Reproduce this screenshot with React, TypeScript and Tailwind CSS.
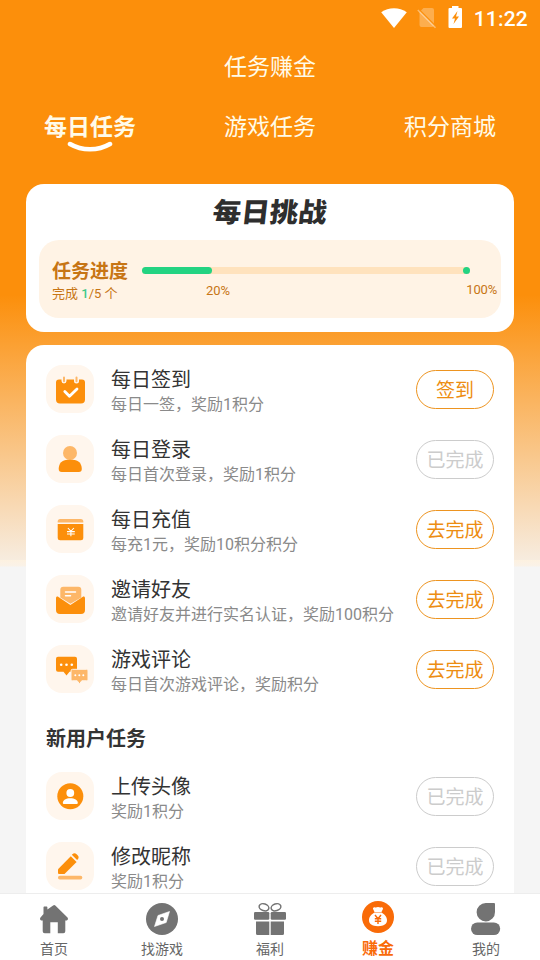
import { ReactNode } from 'react';
import clsx from 'clsx';

type Task = {
  title: string;
  desc: string;
  action: string;
  done?: boolean;
  icon: ReactNode;
};

const CalendarIcon = () => (
  <svg width="48" height="48" viewBox="0 0 48 48" fill="none">
    <path d="M10 17.500a3 3 0 0 1 3-3h2.500v1.500a2.500 2.500 0 0 0 5 0v-1.500h7.500v1.500a2.500 2.500 0 0 0 5 0v-1.500H36a3 3 0 0 1 3 3V34.500a4 4 0 0 1-4 4H14a4 4 0 0 1-4-4Z" fill="#fc8f0b" />
    <path d="M18 12.500v3.800M30.500 12.500v3.800" stroke="#fdb768" strokeWidth="2" strokeLinecap="round" />
    <path d="m18.800 26.500 4.700 4.800 7.500-7.300" stroke="#fff" strokeWidth="2.800" strokeLinecap="round" strokeLinejoin="round" />
  </svg>
);

const UserIcon = () => (
  <svg width="48" height="48" viewBox="0 0 48 48" fill="none">
    <circle cx="24" cy="18" r="7" fill="#fdb768" />
    <path d="M12.700 34c0-5.500 3.500-9.200 9-9.200h5c5.500 0 9.100 3.700 9.100 9.200 0 2-1 2.900-3 2.900H15.700c-2 0-3-.9-3-2.900Z" fill="#fc8f0b" />
  </svg>
);

const WalletIcon = () => (
  <svg width="48" height="48" viewBox="0 0 48 48" fill="none">
    <path d="M11.700 17.500v-1a2.500 2.500 0 0 1 2.500-2.500h20.600a2.500 2.500 0 0 1 2.500 2.500v1Z" fill="#fdb768" />
    <path d="M11.700 19h25.600v13.800a2.500 2.500 0 0 1-2.500 2.500H14.200a2.500 2.500 0 0 1-2.500-2.500Z" fill="#fc8f0b" />
    <path d="m21.900 23 3 3.300 3-3.300M24.900 26.300v5M21 26.600h7.800M21 29h7.800" stroke="#fff" strokeWidth="1.100" />
  </svg>
);

const InviteIcon = () => (
  <svg width="48" height="48" viewBox="0 0 48 48" fill="none">
    <path d="M14.300 22.500V14.700a3 3 0 0 1 3-3h15a3 3 0 0 1 3 3v7.800l-10.800 6.300Z" fill="#fdb768" />
    <path d="M19.500 17h10M19.500 20.800h5" stroke="#fff" strokeWidth="1.500" strokeLinecap="round" />
    <path d="M10 23.300c0-1.600 1.200-2.300 2.500-1.400l11.900 8.100 12.100-8.100c1.300-.9 2.500-.2 2.500 1.400V35a4 4 0 0 1-4 4H14a4 4 0 0 1-4-4Z" fill="#fc8f0b" />
  </svg>
);

const CommentIcon = () => (
  <svg width="48" height="48" viewBox="0 0 48 48" fill="none">
    <path d="M12 11.700h17a2 2 0 0 1 2 2v11a2 2 0 0 1-2 2h-5.500l-3 3.800-3-3.800H12a2 2 0 0 1-2-2v-11a2 2 0 0 1 2-2Z" fill="#fc8f0b" />
    <path d="M26.500 24.300H40.500a1.500 1.500 0 0 1 1.500 1.500v8.500a1.500 1.500 0 0 1-1.500 1.500h-4.700l-2.300 3-2.300-3h-4.700a1.500 1.500 0 0 1-1.500-1.500v-8.500a1.500 1.500 0 0 1 1.500-1.500Z" fill="#fdb768" stroke="#fff5ea" />
    <g fill="#fff">
      <circle cx="15.200" cy="19.700" r="1.300" />
      <circle cx="20.500" cy="19.700" r="1.300" />
      <circle cx="25.800" cy="19.700" r="1.300" />
      <circle cx="29.300" cy="30.300" r="1" />
      <circle cx="33.300" cy="30.300" r="1" />
      <circle cx="37.300" cy="30.300" r="1" />
    </g>
  </svg>
);

const AvatarIcon = () => (
  <svg width="48" height="48" viewBox="0 0 48 48" fill="none">
    <circle cx="24.300" cy="24.300" r="13" fill="#fc8f0b" />
    <circle cx="24.300" cy="21" r="3.900" fill="#fff" />
    <path d="M16.800 31c0-3 3.200-4.800 7.500-4.800s7.500 1.800 7.500 4.800c0 .6-.4.900-1 .9h-13c-.6 0-1-.3-1-.9Z" fill="#fff" />
  </svg>
);

const PencilIcon = () => (
  <svg width="48" height="48" viewBox="0 0 48 48" fill="none">
    <path d="m12 27.300 12.800-13 5.800 5.600L18.500 32H13a1 1 0 0 1-1-1Z" fill="#fc8f0b" />
    <path d="m25.800 12.800.6-.6a3 3 0 0 1 4.200 0l1 1a3 3 0 0 1 0 4.200l-.5.600Z" fill="#fc8f0b" />
    <rect x="12" y="33.800" width="24.300" height="3.700" rx="1.800" fill="#fdb768" />
  </svg>
);

const dailyTasks: Task[] = [
  { title: '每日签到', desc: '每日一签，奖励1积分', action: '签到', icon: <CalendarIcon /> },
  { title: '每日登录', desc: '每日首次登录，奖励1积分', action: '已完成', done: true, icon: <UserIcon /> },
  { title: '每日充值', desc: '每充1元，奖励10积分积分', action: '去完成', icon: <WalletIcon /> },
  { title: '邀请好友', desc: '邀请好友并进行实名认证，奖励100积分', action: '去完成', icon: <InviteIcon /> },
  { title: '游戏评论', desc: '每日首次游戏评论，奖励积分', action: '去完成', icon: <CommentIcon /> },
];

const newUserTasks: Task[] = [
  { title: '上传头像', desc: '奖励1积分', action: '已完成', done: true, icon: <AvatarIcon /> },
  { title: '修改昵称', desc: '奖励1积分', action: '已完成', done: true, icon: <PencilIcon /> },
];

const navItems = [
  {
    label: '首页',
    icon: (
      <svg width="32" height="34" viewBox="0 0 32 34" fill="#737373">
        <path d="M5.500 12V5.500c0-.6.400-1 1-1H8.400c.6 0 1 .4 1 1v2l5.700-4a1.700 1.700 0 0 1 2.200 0L29.500 15.500c.8.800.6 2.900-.8 2.900h-1.400V29.300a2 2 0 0 1-2 2h-5.500v-11h-7.500v11H6.700a2 2 0 0 1-2-2V18.400H3.300c-1.400 0-1.600-2.100-.8-2.900Z" />
      </svg>
    ),
  },
  {
    label: '找游戏',
    icon: (
      <svg width="32" height="34" viewBox="0 0 32 34">
        <circle cx="16" cy="17" r="16" fill="#737373" />
        <path d="m23.500 9.500-3.300 11-11.700 4 3.500-11Z" fill="#fff" stroke="#fff" strokeWidth=".6" strokeLinejoin="round" />
        <circle cx="16" cy="17" r="2" fill="#737373" />
      </svg>
    ),
  },
  {
    label: '福利',
    icon: (
      <svg width="32" height="34" viewBox="0 0 32 34" fill="#737373">
        <ellipse cx="10" cy="5.300" rx="5" ry="3.400" transform="rotate(18 10 5.300)" fill="none" stroke="#737373" strokeWidth="1.500" />
        <ellipse cx="22" cy="5.300" rx="5" ry="3.400" transform="rotate(-18 22 5.300)" fill="none" stroke="#737373" strokeWidth="1.500" />
        <rect x="0" y="10" width="15.300" height="7.800" rx="1.200" />
        <rect x="16.700" y="10" width="15.300" height="7.800" rx="1.200" />
        <path d="M2 19.500h13.300V33H3.500A1.500 1.500 0 0 1 2 31.500ZM16.700 19.500H30v12a1.500 1.500 0 0 1-1.500 1.500H16.700Z" />
      </svg>
    ),
  },
  {
    label: '赚金',
    active: true,
    icon: (
      <svg className="overflow-visible" width="32" height="34" viewBox="0 0 32 34">
        <circle cx="16" cy="15" r="16" fill="#f96b08" />
        <path d="M12.800 5.200c1.200.7 2-.2 3.200-.2s2 .9 3.200.2c1.500-.3 2.300 1 1.500 2.300L19.500 10h-7l-1.200-2.500c-.8-1.300 0-2.600 1.500-2.300ZM12.500 10.500h7c3 1.500 5.500 4.500 5.500 7.500 0 4-3 6.200-9 6.200S7 22 7 18c0-3 2.500-6 5.500-7.500Z" fill="#fff" />
        <path d="m13 13 3 3.800 3-3.800M16 16.800v5.200M12.800 16.700h6.400M12.800 19.200h6.400" fill="none" stroke="#f96b08" strokeWidth="1.400" />
      </svg>
    ),
  },
  {
    label: '我的',
    icon: (
      <svg width="32" height="34" viewBox="0 0 32 34" fill="#737373">
        <path d="M15.800 1H24a1 1 0 0 1 1 1v8a9.200 9.200 0 1 1-9.200-9Z" />
        <rect x="1" y="20.400" width="29.200" height="12.700" rx="6.300" />
      </svg>
    ),
  },
];

function StatusBar() {
  return (
    <div className="flex h-[37px] items-center justify-end pr-3 text-white">
      <svg width="26" height="22" viewBox="0 0 26 22" fill="#fff">
        <path d="M.2 4.300C7.500-1 18.500-1 25.800 4.300L13 20Z" />
      </svg>
      <svg className="ml-[10px]" width="20" height="22" viewBox="0 0 20 22">
        <path d="M6.500 0H15a2 2 0 0 1 2 2V17a2 2 0 0 1-2 2H4.500a2 2 0 0 1-2-2V4Z" fill="#fff" fillOpacity=".28" />
        <path d="M2 1.500 19 18.500" stroke="#fc8f0b" strokeWidth="1.500" />
        <path d="M.8 2 18.500 19.800" stroke="#fff" strokeOpacity=".4" strokeWidth="1.500" />
      </svg>
      <svg className="ml-[11px] mb-[3px]" width="15" height="22" viewBox="0 0 15 22">
        <path d="M4 0h6.500v2H13a1 1 0 0 1 1 1v18a1 1 0 0 1-1 1H1.500a1 1 0 0 1-1-1V3a1 1 0 0 1 1-1H4Z" fill="#fff" />
        <path d="M9.500 5 4 12.500h3L5.500 18l5.500-7.500H8Z" fill="#fc8f0b" />
      </svg>
      <span className="ml-[11px] font-['Roboto'] text-[21px] font-medium leading-9 tracking-[0.2px]">11:22</span>
    </div>
  );
}

function TaskRow({ task }: { task: Task }) {
  return (
    <div className="flex h-[70px] shrink-0 items-center px-5">
      <div className="size-12 shrink-0 rounded-2xl bg-[#fff6ed]">{task.icon}</div>
      <div className="ml-[17px] flex-1 pt-[6px]">
        <div className="text-[20px] leading-[26px] text-[#333]">{task.title}</div>
        <div className="text-[16px] leading-6 text-[#8a8a8a]">{task.desc}</div>
      </div>
      <button
        className={clsx(
          'h-[39px] w-[78px] rounded-full border pt-[2px] text-[19px] leading-none',
          task.done ? 'border-[#ccc] text-[#ccc]' : 'border-[#ed9420] text-[#ed8d12]'
        )}
      >
        {task.action}
      </button>
    </div>
  );
}

export default function App() {
  return (
    <div className="flex h-[960px] w-[540px] flex-col overflow-hidden bg-[#f5f5f5] bg-[linear-gradient(180deg,#fc8f0b_0,#fc8f0b_295px,#f7ecdf_560px,#fdf1e0_560px,#faf2e8_566px,#f5f5f5_567px)] font-['Roboto','Noto_Sans_CJK_SC',sans-serif]">
      <StatusBar />
      <h1 className="h-[62px] text-center text-[23px] leading-[62px] text-[#fffbe9]">任务赚金</h1>

      {/* Tabs */}
      <div className="grid h-[85px] grid-cols-3 pt-[11px] text-center text-[23px] leading-9 text-[#fffbe9]">
        <div className="flex flex-col items-center font-bold">
          每日任务
          <svg className="-mt-[5px]" width="46" height="12" viewBox="0 0 46 12" fill="none">
            <path d="M3 3c12 7 28 7 40 0" stroke="#fff" strokeWidth="4.500" strokeLinecap="round" />
          </svg>
        </div>
        <div>游戏任务</div>
        <div>积分商城</div>
      </div>

      {/* Challenge card */}
      <div className="mx-[26px] h-[148px] shrink-0 rounded-[18px] bg-white px-[13px]">
        <h2 className="h-14 -skew-x-6 scale-y-95 pt-[2px] text-center text-[28.500px] font-black leading-[56px] text-[#2e2e2e]">每日挑战</h2>
        <div className="flex h-[78px] rounded-[20px] bg-[#fff3e5] pl-[13px] text-[#c77514]">
          <div className="w-[90px] pt-[19px]">
            <div className="text-[19px] font-bold leading-[26px]">任务进度</div>
            <div className="-mt-[2px] text-[13px] leading-[21px]">
              完成 <span className="font-medium text-[#3fc98a]">1</span>/5 个
            </div>
          </div>
          <div className="flex-1 pt-[27px]">
            <div className="flex h-[7px] w-[328px] justify-between rounded-full bg-[#ffe2bd]">
              <div className="w-[70px] rounded-full bg-[#23d382]" />
              <div className="w-[7px] rounded-full bg-[#23d382]" />
            </div>
            <div className="flex justify-between pl-16 pr-1 pt-[7px] text-[13px] leading-[17px]">
              <span className="pt-px">20%</span>
              <span className="tracking-[-0.2px]">100%</span>
            </div>
          </div>
        </div>
      </div>

      {/* Task list, runs under the tab bar */}
      <div className="mx-[26px] mt-[13px] flex min-h-0 flex-1 flex-col overflow-hidden rounded-t-[18px] bg-white pt-[9px]">
        {dailyTasks.map((task) => (
          <TaskRow key={task.title} task={task} />
        ))}
        <h3 className="h-[57px] shrink-0 pl-5 pt-[7px] text-[20px] font-bold leading-[56px] text-[#333]">新用户任务</h3>
        {newUserTasks.map((task) => (
          <TaskRow key={task.title} task={task} />
        ))}
      </div>

      <nav className="grid h-[67px] shrink-0 grid-cols-5 border-t border-[#ededed] bg-white">
        {navItems.map((item) => (
          <div key={item.label} className="flex flex-col items-center pt-2">
            {item.icon}
            <span
              className={clsx(
                'pt-px leading-6',
                item.active ? 'text-[16px] font-bold text-[#f96b08]' : 'text-[14px] text-[#666]'
              )}
            >
              {item.label}
            </span>
          </div>
        ))}
      </nav>
    </div>
  );
}
